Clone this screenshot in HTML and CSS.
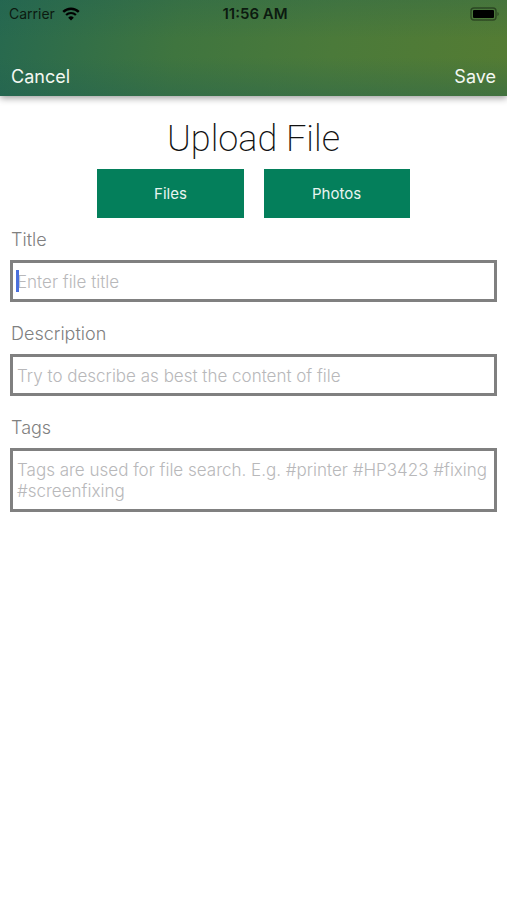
FILE: index.html
```html
<!DOCTYPE html>
<html lang="en">
<head>
    <meta charset="UTF-8">
    <meta name="viewport" content="width=device-width, initial-scale=1">
    <title>Upload File</title>
    <link rel="stylesheet" href="styles.css">
</head>
<body>

    <header class="header">
        <div class="status">
            <div class="carrier">
                <span>Carrier</span>
                <svg class="wifi" viewBox="0 0 18 14" width="18" height="14">
                    <path d="M1.2 4.9a11.2 11.2 0 0 1 15.6 0" fill="none" stroke="#000" stroke-width="2.4"/>
                    <path d="M4.1 8a7 7 0 0 1 9.8 0" fill="none" stroke="#000" stroke-width="2.2"/>
                    <path d="M9 13.6L6.2 10.7a4 4 0 0 1 5.6 0z"/>
                </svg>
            </div>
            <div class="time">11:56 AM</div>
            <div class="battery">
                <svg viewBox="0 0 31 14" width="31" height="14">
                    <rect x="1" y="1" width="25" height="12" rx="3" fill="none" stroke="#000" stroke-opacity=".4" stroke-width="1.4"/>
                    <rect x="3" y="3" width="21" height="8" rx="1"/>
                    <path d="M27.5 5v4a2.3 2.3 0 0 0 0-4z" fill-opacity=".45"/>
                </svg>
            </div>
        </div>
        <nav class="nav">
            <button type="button" class="link">Cancel</button>
            <button type="submit" form="upload" class="link">Save</button>
        </nav>
    </header>

    <main class="content">
        <h1>Upload File</h1>

        <div class="sources">
            <button type="button" class="source">Files</button>
            <button type="button" class="source">Photos</button>
        </div>

        <form id="upload" class="form">
            <label for="title">Title</label>
            <div class="field">
                <input id="title" type="text" placeholder="Enter file title">
                <span class="caret"></span>
            </div>

            <label for="description">Description</label>
            <div class="field">
                <input id="description" type="text" placeholder="Try to describe as best the content of file">
            </div>

            <label for="tags">Tags</label>
            <div class="field">
                <textarea id="tags" rows="2" placeholder="Tags are used for file search. E.g. #printer #HP3423 #fixing #screenfixing"></textarea>
            </div>
        </form>
    </main>

</body>
</html>
```

FILE: styles.css
```css
* {
    box-sizing: border-box;
    margin: 0;
    padding: 0;
}

body {
    background: #fff;
    font-family: Inter, "Liberation Sans", sans-serif;
}

button,
input,
textarea {
    font-family: inherit;
    border: 0;
    border-radius: 0;
}

/* header */
.header {
    background:
        linear-gradient(to bottom, rgba(30, 95, 85, .25), rgba(30, 95, 85, 0) 40%, rgba(30, 95, 85, 0) 60%, rgba(30, 95, 85, .35)),
        linear-gradient(100deg, #27694f 0%, #3f753f 35%, #4b7a3a 65%, #547c33 100%);
    box-shadow: 0 2px 7px rgba(0, 0, 0, .4);
}

.status {
    display: grid;
    grid-template-columns: 1fr auto 1fr;
    align-items: center;
    height: 27px;
    padding: 0 6px 0 9px;
    font-size: 14px;
    color: #0c1a10;
}

.carrier {
    display: flex;
    align-items: center;
    gap: 7px;
}

.time {
    font-size: 15px;
    font-weight: 600;
}

.battery {
    display: flex;
    justify-content: flex-end;
}

.nav {
    display: flex;
    justify-content: space-between;
    padding: 38px 11px 7px;
}

.link {
    background: none;
    color: #f4f8f2;
    font-size: 18px;
    line-height: 24px;
}

/* content */
.content {
    padding: 21px 10px;
}

h1 {
    font-family: Roboto, Inter, sans-serif;
    font-size: 36px;
    line-height: 44px;
    font-weight: 200;
    text-align: center;
    color: #111;
}

.sources {
    display: flex;
    justify-content: center;
    gap: 20px;
    margin-top: 8px;
}

.source {
    width: 30%;
    height: 49px;
    background: #047f5b;
    color: #e9f5f0;
    font-size: 15px;
}

.form label {
    display: block;
    margin: 11px 1px 9px;
    font-size: 18px;
    line-height: 22px;
    font-weight: 300;
    color: #808080;
}

.field {
    position: relative;
    margin-bottom: 21px;
}

.field input,
.field textarea {
    display: block;
    width: 100%;
    padding: 9px 4px 7px;
    border: 3px solid #808080;
    background: #fff;
    font-size: 17px;
    font-weight: 300;
    line-height: 21px;
    resize: none;
    outline: 0;
}

.field input {
    height: 42px;
}

.field textarea {
    overflow: hidden;
}

::placeholder {
    color: #b8b8ba;
}

.caret {
    position: absolute;
    top: 10px;
    left: 6px;
    width: 3px;
    height: 22px;
    background: #4a6fdc;
}
```
